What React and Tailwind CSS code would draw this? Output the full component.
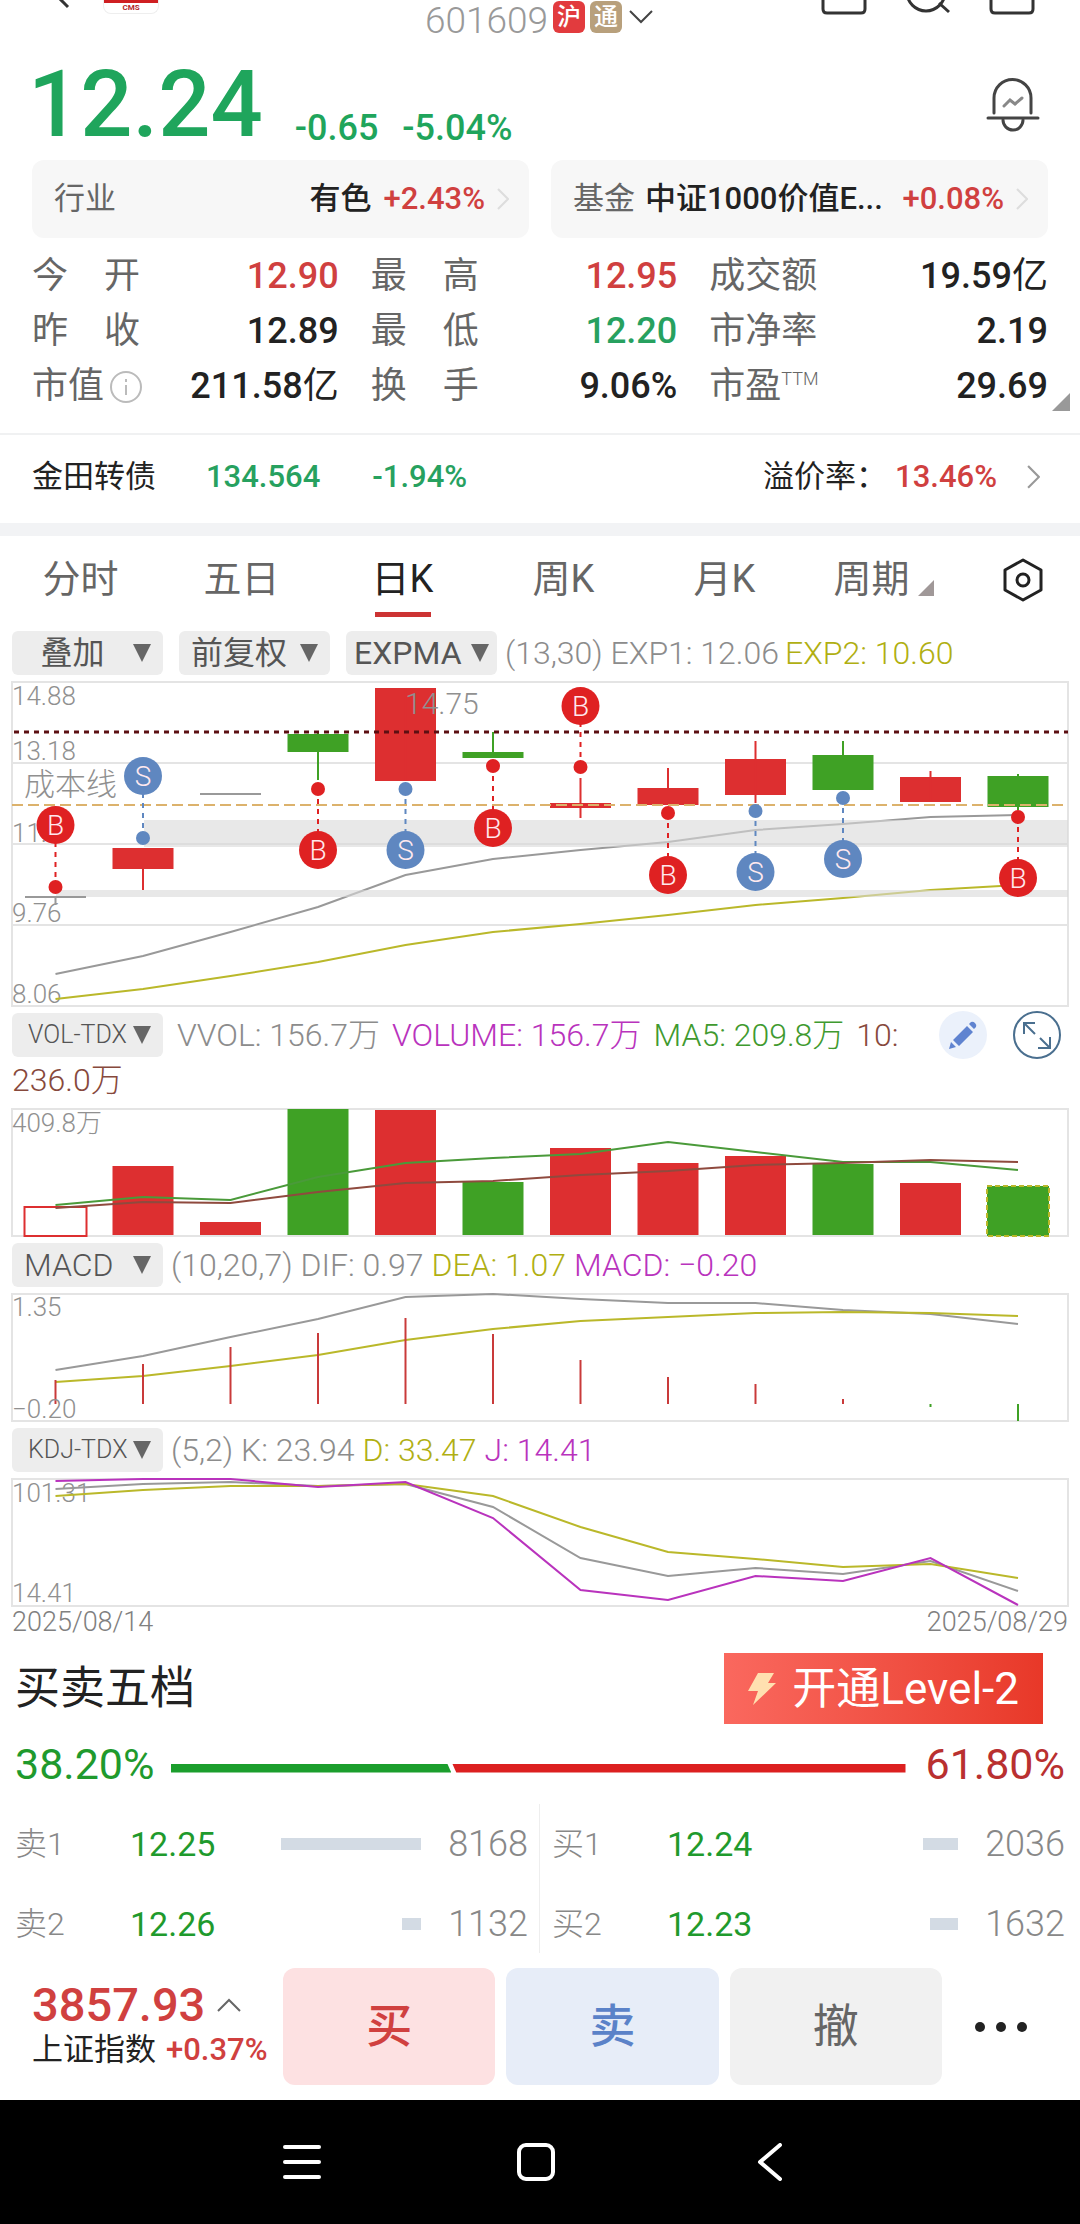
const X = (i) => 43.5 + 87.5 * i;
const RED = "#dd2f30";
const GREEN = "#3fa125";
const GRAY = "#999999";
const OLIVE = "#bab82a";
const PURPLE = "#b933bd";
const W = 1056;

function Line({ ys, color }) {
  return (
    <polyline
      points={ys.map((y, i) => `${X(i)},${y}`).join(" ")}
      fill="none"
      stroke={color}
      strokeWidth="2"
    />
  );
}

function Label({ x = 0, y, children, size = 26 }) {
  return (
    <text x={x} y={y} fill="#909090" fontSize={size}>
      {children}
    </text>
  );
}

function Chart({ height, title, children }) {
  return (
    <svg
      viewBox={`0 0 ${W} ${height}`}
      className="block h-auto w-full overflow-visible font-light"
      role="img"
      aria-label={title}
    >
      <rect x="0" y="0" width={W} height={height} fill="none" stroke="#e4e4e4" strokeWidth="2" />
      {children}
    </svg>
  );
}

const candles = [
  { c: "#999999", top: 214, bottom: 216, high: 214, low: 223 },
  { c: RED, top: 166, bottom: 187, high: 166, low: 208 },
  { c: "#999999", top: 111, bottom: 113, high: 111, low: 113 },
  { c: GREEN, top: 52, bottom: 70, high: 51, low: 98 },
  { c: RED, top: 6, bottom: 99, high: 6, low: 99 },
  { c: GREEN, top: 70, bottom: 76, high: 50, low: 76 },
  { c: RED, top: 121, bottom: 126, high: 96, low: 136 },
  { c: RED, top: 106, bottom: 123, high: 86, low: 123 },
  { c: RED, top: 77, bottom: 113, high: 59, low: 121 },
  { c: GREEN, top: 73, bottom: 108, high: 59, low: 108 },
  { c: RED, top: 95, bottom: 120, high: 89, low: 120 },
  { c: GREEN, top: 94, bottom: 125, high: 92, low: 128 },
];

const markers = [
  { i: 0, t: "B", dot: 205, at: 143 },
  { i: 1, t: "S", dot: 156, at: 94 },
  { i: 3, t: "B", dot: 107, at: 168 },
  { i: 4, t: "S", dot: 107, at: 168 },
  { i: 5, t: "B", dot: 84, at: 146 },
  { i: 6, t: "B", dot: 85, at: 24 },
  { i: 7, t: "B", dot: 131, at: 193 },
  { i: 8, t: "S", dot: 129, at: 190 },
  { i: 9, t: "S", dot: 116, at: 177 },
  { i: 11, t: "B", dot: 135, at: 196 },
];

function PriceChart() {
  return (
    <Chart height={324} title="日K">
      {[81, 162, 243].map((y) => (
        <line key={y} x1="0" x2={W} y1={y} y2={y} stroke="#e4e4e4" strokeWidth="2" />
      ))}
      <Label y={23}>14.88</Label>
      <Label y={78}>13.18</Label>
      <Label y={160}>11.</Label>
      <Label y={240}>9.76</Label>
      <Label y={321}>8.06</Label>
      <Label x={12} y={113} size={31}>成本线</Label>
      <Line ys={[292, 274, 250, 225, 193, 177, 168, 160, 148, 142, 135, 133]} color={GRAY} />
      <Line ys={[317, 307, 294, 280, 263, 250, 242, 233, 223, 216, 208, 203]} color={OLIVE} />
      <rect x="132" y="138" width="924" height="27" fill="#d9d9d9" opacity="0.6" />
      <rect x="44" y="208" width="1012" height="7" fill="#d9d9d9" opacity="0.6" />
      {candles.map((k, i) => (
        <g key={i} fill={k.c}>
          <rect x={X(i) - 30.5} y={k.top} width="61" height={k.bottom - k.top} />
          <rect x={X(i) - 1} y={k.high} width="2" height={k.low - k.high} />
        </g>
      ))}
      <line x1="2" x2={W} y1="50" y2="50" stroke="#5c0f12" strokeWidth="3" strokeDasharray="5 5" />
      <line x1="0" x2={W} y1="123" y2="123" stroke="#dcb26c" strokeWidth="2" strokeDasharray="11 5" />
      <Label x={393} y={32} size={30}>14.75</Label>
      {markers.map(({ i, t, dot, at }) => {
        const c = t === "B" ? "#df2122" : "#5f87c0";
        return (
          <g key={i}>
            <line x1={X(i)} x2={X(i)} y1={dot} y2={at} stroke={c} strokeWidth="2" strokeDasharray="5 5" />
            <circle cx={X(i)} cy={dot} r="7" fill={c} />
            <circle cx={X(i)} cy={at} r="19" fill={c} />
            <text x={X(i)} y={at + 10} textAnchor="middle" fontSize="28" fill="#ffe9ee">
              {t}
            </text>
          </g>
        );
      })}
    </Chart>
  );
}

const volumes = [
  [98, "hollow"], [57, RED], [113, RED], [0, GREEN], [1, RED], [73, GREEN],
  [39, RED], [54, RED], [47, RED], [55, GREEN], [74, RED], [77, "live"],
];

function VolumeChart() {
  return (
    <Chart height={127} title="VOL-TDX">
      <Label y={23}>409.8万</Label>
      {volumes.map(([y, c], i) =>
        c === "hollow" ? (
          <rect key={i} x={X(i) - 31} y={y} width="62" height={127 - y} fill="#fff" stroke={RED} strokeWidth="2" />
        ) : c === "live" ? (
          <rect key={i} x={X(i) - 31} y={y} width="62" height={127 - y} fill={GREEN} stroke={OLIVE} strokeWidth="2" strokeDasharray="5 3" />
        ) : (
          <rect key={i} x={X(i) - 30.5} y={y} width="61" height={126 - y} fill={c} />
        )
      )}
      <Line ys={[96, 88, 91, 68, 54, 49, 45, 33, 43, 53, 53, 61]} color="#4a9a3a" />
      <Line ys={[99, 93, 94, 83, 74, 72, 66, 62, 56, 54, 51, 53]} color="#8f4a3e" />
    </Chart>
  );
}

function MacdChart() {
  const ends = [86, 70, 53, 39, 24, 40, 66, 83, 90, 105, 113, 127];
  return (
    <Chart height={127} title="MACD">
      <Line ys={[76, 62, 43, 25, 3, 0, 5, 9, 9, 16, 20, 30]} color={GRAY} />
      <Line ys={[88, 82, 72, 61, 46, 35, 27, 23, 19, 18, 19, 22]} color={OLIVE} />
      {ends.map((y, i) => (
        <line key={i} x1={X(i)} x2={X(i)} y1="110" y2={y} stroke={y > 110 ? GREEN : "#c93a3a"} strokeWidth="2" />
      ))}
      <Label y={22}>1.35</Label>
      <Label y={124}>−0.20</Label>
    </Chart>
  );
}

function KdjChart() {
  return (
    <Chart height={127} title="KDJ-TDX">
      <Label y={23}>101.31</Label>
      <Label y={123}>14.41</Label>
      <Line ys={[10, 5, 3, 7, 5, 28, 79, 97, 89, 95, 82, 112]} color={GRAY} />
      <Line ys={[17, 11, 7, 7, 5, 17, 48, 73, 80, 88, 85, 99]} color={OLIVE} />
      <Line ys={[2, 0, 0, 8, 3, 39, 111, 121, 97, 102, 79, 126]} color={PURPLE} />
    </Chart>
  );
}

function Picker({ children, small, center }) {
  return (
    <button
      type="button"
      className="flex h-11 w-[151px] shrink-0 items-center justify-between rounded-md bg-[#ededed] pr-3 pl-3 text-[#555]"
    >
      <span
        className={`flex-1 whitespace-nowrap ${small ? "pl-1 text-left text-[25px]" : "text-[32px]"} ${
          center ? "pr-3 text-center" : "text-left"
        }`}
      >
        {children}
      </span>
      <svg viewBox="0 0 18 18" className="w-[18px] shrink-0" fill="#666" aria-hidden="true">
        <path d="M0 0h18L9 18z" />
      </svg>
    </button>
  );
}

function Chevron({ color, className }) {
  return (
    <svg viewBox="0 0 12 22" className={className} fill="none" stroke={color} strokeWidth="2" aria-hidden="true">
      <path d="M1 1l10 10L1 21" />
    </svg>
  );
}

function Spread({ text }) {
  return (
    <span className="flex w-[108px] justify-between">
      {[...text].map((ch) => (
        <span key={ch}>{ch}</span>
      ))}
    </span>
  );
}

function Stat({ label, value, tone = "text-[#222]" }) {
  return (
    <div className="flex items-center justify-between">
      <dt className="text-[#666]">{label}</dt>
      <dd className={`font-medium ${tone}`}>{value}</dd>
    </div>
  );
}

function Yi({ n }) {
  return (
    <>
      {n}
      <span className="font-normal">亿</span>
    </>
  );
}

function Quote({ side, price, amount }) {
  return (
    <tr className="h-20">
      <th scope="row" className="w-[115px] text-left text-[32px] font-light text-[#888]">{side}</th>
      <td className="text-[#1f9a2d]">{price}</td>
      <td>
        <div
          className="ml-auto h-3 bg-[#d3dbe4]"
          style={{ width: Math.round((amount / 8168) * 140) }}
        />
      </td>
      <td className="w-[107px] text-right text-4xl font-light text-[#888]">{amount}</td>
    </tr>
  );
}

const tabs = ["分时", "五日", "日K", "周K", "月K"];

export default function App() {
  return (
    <div className="w-full overflow-hidden bg-white font-['Roboto','Noto_Sans_CJK_SC',sans-serif] text-[#222]">
      <header className="grid h-[42px] grid-cols-[1fr_auto_1fr] items-start overflow-hidden">
        <div className="flex items-start pl-[54px]">
          <button type="button" aria-label="返回" className="w-[49px]">
            <svg viewBox="0 0 16 10" className="w-4" fill="none" stroke="#333" strokeWidth="3">
              <path d="M4 -3l10 10" />
            </svg>
          </button>
          <div className="flex h-[14px] w-14 flex-col items-center overflow-hidden rounded-b-lg border border-t-0 border-[#eee]">
            <div className="h-[3px] w-full shrink-0 bg-[#cf1f22]" />
            <span className="text-[8px] leading-[10px] font-bold text-[#b3262a]">CMS</span>
          </div>
        </div>
        <button type="button" className="flex h-[42px] items-center gap-[5px] text-[37px] leading-[42px] font-light text-[#999]">
          601609
          <span className="mb-2 flex size-8 items-center justify-center rounded-md bg-[#e23b3e] text-2xl font-medium text-white">沪</span>
          <span className="mb-2 flex size-8 items-center justify-center rounded-md bg-[#b8a07c] text-2xl font-medium text-white">通</span>
          <svg viewBox="0 0 28 16" className="mb-2 w-7" fill="none" stroke="#444" strokeWidth="2">
            <path d="M3 2l11 11L25 2" />
          </svg>
        </button>
        <div className="flex justify-end gap-[38px] pr-[45px]">
          <button type="button" aria-label="窗口">
            <svg viewBox="0 0 46 18" className="w-[46px]" fill="none" stroke="#333" strokeWidth="3">
              <path d="M2 -6V9q0 4 4 4h34q4 0 4-4V-6" />
            </svg>
          </button>
          <button type="button" aria-label="搜索">
            <svg viewBox="0 0 46 18" className="w-[46px]" fill="none" stroke="#333" strokeWidth="3">
              <circle cx="21" cy="-8" r="19" />
              <path d="M34 3l10 9" />
            </svg>
          </button>
          <button type="button" aria-label="更多">
            <svg viewBox="0 0 46 18" className="w-[46px]" fill="none" stroke="#333" strokeWidth="3">
              <path d="M2 -6V9q0 4 4 4h34q4 0 4-4V-6" />
            </svg>
          </button>
        </div>
      </header>

      <section className="flex h-[118px] items-center justify-between px-7 pt-2">
        <div className="flex items-baseline text-[#1fa55c]">
          <span className="text-[92px] leading-[110px] font-medium">12.24</span>
          <span className="relative top-1 pl-8 text-4xl font-medium">-0.65</span>
          <span className="relative top-1 pl-6 text-4xl font-medium">-5.04%</span>
        </div>
        <button type="button" aria-label="预警" className="mr-3">
          <svg viewBox="0 0 54 56" className="w-[54px]" fill="none" stroke="#444" strokeWidth="3" strokeLinecap="round">
            <path d="M8 36V21a18.500 18.500 0 0 1 37 0v15M2 41h50M17 43a10 10 0 0 0 20 0" />
            <path d="M18 29l6-6 5 4 7-6" stroke="#888" />
          </svg>
        </button>
      </section>

      <section className="grid grid-cols-2 gap-[22px] px-8 text-[31px]">
        <a href="#industry" className="flex h-[78px] items-center rounded-xl bg-[#f7f7f7] pr-5 pl-[22px]">
          <span className="flex-1 text-[#666]">行业</span>
          <span className="font-medium">有色</span>
          <span className="pl-3 font-medium text-[#d0403f]">+2.43%</span>
          <Chevron color="#ddd" className="ml-3 w-3" />
        </a>
        <a href="#fund" className="flex h-[78px] items-center rounded-xl bg-[#f7f7f7] pr-5 pl-[22px]">
          <span className="pr-2.5 text-[#666]">基金</span>
          <span className="flex-1 font-medium whitespace-nowrap">中证1000价值E...</span>
          <span className="font-medium text-[#d0403f]">+0.08%</span>
          <Chevron color="#ddd" className="ml-3 w-3" />
        </a>
      </section>

      <section className="relative">
        <dl className="grid grid-cols-[306fr_306fr_338fr] gap-x-8 px-8 pt-[11px] pb-[19px] text-4xl leading-[55px]">
          <Stat label={<Spread text="今开" />} value="12.90" tone="text-[#d0403f]" />
          <Stat label={<Spread text="最高" />} value="12.95" tone="text-[#d0403f]" />
          <Stat label="成交额" value={<Yi n="19.59" />} />
          <Stat label={<Spread text="昨收" />} value="12.89" />
          <Stat label={<Spread text="最低" />} value="12.20" tone="text-[#27a15f]" />
          <Stat label="市净率" value="2.19" />
          <Stat
            label={
              <span className="flex items-center gap-1.5">
                市值
                <svg viewBox="0 0 32 32" className="w-8" fill="none" stroke="#bbb" strokeWidth="2" aria-hidden="true">
                  <circle cx="16" cy="16" r="15" />
                  <path d="M16 14v10M16 8v3" />
                </svg>
              </span>
            }
            value={<Yi n="211.58" />}
          />
          <Stat label={<Spread text="换手" />} value="9.06%" />
          <Stat
            label={
              <span className="flex">
                市盈<span className="text-[18px] leading-10 font-light">TTM</span>
              </span>
            }
            value="29.69"
          />
        </dl>
        <svg viewBox="0 0 18 18" className="absolute right-[10px] bottom-[22px] w-[18px]" fill="#999" aria-hidden="true">
          <path d="M18 0v18H0z" />
        </svg>
      </section>

      <a href="#bond" className="flex h-[90px] items-center border-t-2 border-[#f0f1f2] pr-10 pb-1 pl-8 text-[31px]">
        <span className="pr-[50px]">金田转债</span>
        <span className="pr-[52px] font-medium text-[#27a15f]">134.564</span>
        <span className="flex-1 font-medium text-[#27a15f]">-1.94%</span>
        <span className="pr-2">溢价率：</span>
        <span className="font-medium text-[#d0403f]">13.46%</span>
        <Chevron color="#999" className="ml-[30px] w-[13px]" />
      </a>
      <div className="h-[13px] bg-[#f2f3f5]" />

      <nav className="grid h-[95px] grid-cols-[repeat(6,161fr)_114fr] pb-1 text-[38px] text-[#666]">
        {tabs.map((t) => (
          <button key={t} type="button" className="relative flex items-center justify-center pb-1">
            <span className={t === "日K" ? "text-[#222]" : ""}>{t}</span>
            {t === "日K" && <span className="absolute bottom-2.5 h-[5px] w-14 bg-[#cc3333]" />}
          </button>
        ))}
        <button type="button" className="flex items-center justify-center gap-2 pr-1 pb-1">
          周期
          <svg viewBox="0 0 16 16" className="mt-4 w-4" fill="#a09898" aria-hidden="true">
            <path d="M16 0v16H0z" />
          </svg>
        </button>
        <button type="button" aria-label="设置" className="flex items-center justify-center pb-1">
          <svg viewBox="0 0 40 44" className="w-10" fill="none" stroke="#222" strokeWidth="3">
            <path d="M20 2l18 10v20L20 42 2 32V12z" strokeLinejoin="round" />
            <circle cx="20" cy="22" r="6" />
          </svg>
        </button>
      </nav>

      <main className="flex flex-col gap-[7px] px-3">
        <div className="flex items-center text-[32px] leading-[44px] font-light text-[#8c8c8c]">
          <div className="flex gap-4 pr-2 font-normal">
            <Picker center>叠加</Picker>
            <Picker>前复权</Picker>
            <button type="button" className="flex h-11 w-[151px] items-center justify-between rounded-md bg-[#ededed] px-2 text-[32px] text-[#555]">
              EXPMA
              <svg viewBox="0 0 18 18" className="w-[18px] shrink-0" fill="#666" aria-hidden="true">
                <path d="M0 0h18L9 18z" />
              </svg>
            </button>
          </div>
          <span className="pr-1.5">(13,30) EXP1: 12.06</span>
          <span className="text-[#b0af12]">EXP2: 10.60</span>
        </div>
        <PriceChart />
        <div className="flex items-start">
          <div className="flex flex-1 flex-wrap gap-x-3 gap-y-px text-[32px] leading-[44px] font-light">
            <Picker small>VOL-TDX</Picker>
            <span className="pl-0.5 text-[#8c8c8c]">VVOL: 156.7万</span>
            <span className="text-[#b933bd]">VOLUME: 156.7万</span>
            <span className="text-[#3f9a2f]">MA5: 209.8万</span>
            <span className="text-[#87493c]">10:</span>
            <span className="text-[#87493c]">236.0万</span>
          </div>
          <div className="flex h-11 items-center gap-[26px] pr-[7px]">
            <button type="button" aria-label="画线">
              <svg viewBox="0 0 48 48" className="w-12">
                <circle cx="24" cy="24" r="24" fill="#ebf1fb" />
                <path d="M10 38l2-7 5 5zM14 29L28 15l6 6-14 14zM30 13l2-2q2-1 4 1t1 4l-2 2z" fill="#5f83d0" />
              </svg>
            </button>
            <button type="button" aria-label="全屏">
              <svg viewBox="0 0 48 48" className="w-12" fill="none" stroke="#4a6f8f" strokeWidth="2">
                <circle cx="24" cy="24" r="23" />
                <path d="M11 23V12h11M11 12l11 11M37 26v11H25M37 37L27 27" />
              </svg>
            </button>
          </div>
        </div>
        <VolumeChart />
        <div className="flex gap-2 text-[32px] leading-[44px] font-light text-[#8c8c8c]">
          <Picker>MACD</Picker>
          <span>(10,20,7) DIF: 0.97</span>
          <span className="text-[#b0af12]">DEA: 1.07</span>
          <span className="text-[#b933bd]">MACD: −0.20</span>
        </div>
        <MacdChart />
        <div className="flex gap-2 text-[32px] leading-[44px] font-light text-[#8c8c8c]">
          <Picker small>KDJ-TDX</Picker>
          <span>(5,2) K: 23.94</span>
          <span className="text-[#b0af12]">D: 33.47</span>
          <span className="text-[#b933bd]">J: 14.41</span>
        </div>
        <KdjChart />
      </main>
      <div className="flex justify-between px-3 text-[27px] leading-[32px] font-light text-[#808080]">
        <span>2025/08/14</span>
        <span>2025/08/29</span>
      </div>

      <section className="px-[15px] pt-[15px]">
        <div className="flex items-center justify-between pr-[22px]">
          <h2 className="text-[45px] leading-[70px]">买卖五档</h2>
          <button
            type="button"
            className="flex h-[71px] items-center gap-4 bg-linear-to-r from-[#fa685e] to-[#e83828] px-6 text-[44px] text-white"
          >
            <svg viewBox="0 0 28 32" className="w-7" fill="#ffe0b0" aria-hidden="true">
              <path d="M10 0h16l-6 10h8L5 32l5-14H0z" />
            </svg>
            开通Level-2
          </button>
        </div>
        <div className="flex h-20 items-center text-[43px]">
          <span className="text-[#1f9a2d]">38.20%</span>
          <div className="mt-2 flex h-[9px] flex-1 gap-px pr-5 pl-4">
            <div className="w-[38.2%] bg-[#1b9e2c] [clip-path:polygon(0_0,calc(100%-4px)_0,100%_100%,0_100%)]" />
            <div className="flex-1 bg-[#dc2020] [clip-path:polygon(0_0,100%_0,100%_100%,4px_100%)]" />
          </div>
          <span className="text-[#b93030]">61.80%</span>
        </div>
        <div className="grid h-[149px] grid-cols-2 overflow-hidden text-[34px]">
          <div className="border-r border-[#eee] pr-[11px]">
            <table className="w-full">
              <tbody>
                <Quote side="卖1" price="12.25" amount={8168} />
                <Quote side="卖2" price="12.26" amount={1132} />
              </tbody>
            </table>
          </div>
          <div className="pl-3">
            <table className="w-full">
              <tbody>
                <Quote side="买1" price="12.24" amount={2036} />
                <Quote side="买2" price="12.23" amount={1632} />
              </tbody>
            </table>
          </div>
        </div>
      </section>

      <footer>
        <div className="flex h-[147px] items-center pr-2 pl-8">
          <button type="button" className="flex w-[251px] shrink-0 flex-col items-start pb-2">
            <span className="flex items-center gap-3 text-[47px] leading-[54px] font-medium text-[#d0403f]">
              3857.93
              <svg viewBox="0 0 24 14" className="w-6" fill="none" stroke="#666" strokeWidth="2" aria-hidden="true">
                <path d="M1 13L12 2l11 11" />
              </svg>
            </span>
            <span className="flex gap-2.5 text-[31px] leading-9 whitespace-nowrap">
              上证指数
              <span className="font-medium text-[#d0403f]">+0.37%</span>
            </span>
          </button>
          <div className="grid flex-1 grid-cols-3 gap-[11px] text-[46px] font-medium">
            <button type="button" className="h-[117px] rounded-xl bg-[#fde1e2] text-[#d0403f]">买</button>
            <button type="button" className="h-[117px] rounded-xl bg-[#e7edf8] text-[#5b82c8]">卖</button>
            <button type="button" className="h-[117px] rounded-xl bg-[#f1f1f1] font-normal text-[#666]">撤</button>
          </div>
          <button type="button" aria-label="更多操作" className="flex w-[130px] shrink-0 items-center justify-center gap-[11px] pr-3">
            <span className="size-2.5 rounded-full bg-[#222]" />
            <span className="size-2.5 rounded-full bg-[#222]" />
            <span className="size-2.5 rounded-full bg-[#222]" />
          </button>
        </div>
        <div className="flex h-[124px] items-center justify-center gap-[196px] bg-black pr-2">
          <button type="button" aria-label="最近任务">
            <svg viewBox="0 0 38 38" className="w-[38px]" stroke="#fff" strokeWidth="4" strokeLinecap="round">
              <path d="M2 4h34M2 19h34M2 34h34" />
            </svg>
          </button>
          <button type="button" aria-label="主屏幕">
            <svg viewBox="0 0 38 38" className="w-[38px]" fill="none" stroke="#fff" strokeWidth="4">
              <rect x="2" y="2" width="34" height="34" rx="7" />
            </svg>
          </button>
          <button type="button" aria-label="后退">
            <svg viewBox="0 0 38 38" className="w-[38px]" fill="none" stroke="#fff" strokeWidth="4" strokeLinecap="round" strokeLinejoin="round">
              <path d="M29 2L9 19l20 17" />
            </svg>
          </button>
        </div>
      </footer>
    </div>
  );
}
